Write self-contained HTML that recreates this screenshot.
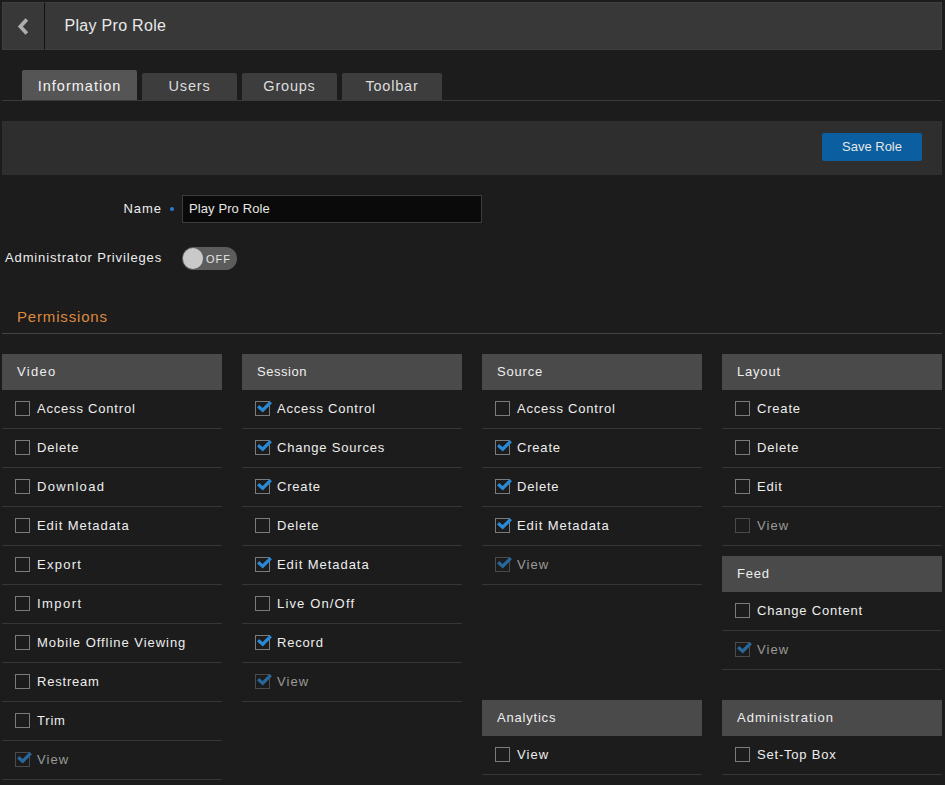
<!DOCTYPE html>
<html><head><meta charset="utf-8">
<style>
*{box-sizing:border-box;margin:0;padding:0}
html,body{width:945px;height:785px;overflow:hidden;background:#1c1c1c;font-family:"Liberation Sans",sans-serif;color:#e6e6e6}
.a{position:absolute}
#hdr{left:2px;top:2px;width:940px;height:48px;background:#383838;border:1px solid #3e3e3e}
#back{left:2px;top:2px;width:43px;height:48px;background:#383838;border:1px solid #3e3e3e;border-right:1px solid #111}
#title{left:64.5px;top:16.5px;font-size:16px;letter-spacing:0.3px;color:#e8e8e8;white-space:nowrap;line-height:17px}
.tab{top:73px;height:27px;background:#3d3d3d;border-radius:2px 2px 0 0;font-size:14.5px;letter-spacing:0.8px;text-align:center;color:#dcdcdc;line-height:27px}
.tab.on{top:70px;height:30px;background:#555555;color:#f2f2f2;line-height:32px;letter-spacing:1px}
#tabline{left:2px;top:100px;width:940px;height:1px;background:#3a3a3a}
#savebar{left:2px;top:121px;width:940px;height:54px;background:#2e2e2e}
#save{left:822px;top:133px;width:100px;height:28px;background:#0b5e9f;border-radius:2px;color:#e6e6e6;font-size:13px;letter-spacing:0px;text-align:center;line-height:28px}
.lbl{font-size:13px;letter-spacing:0.8px;white-space:nowrap;line-height:15px;color:#eeeeee}
#name{right:783px;top:201px;letter-spacing:0.95px}
#admin{right:783px;top:249.5px;letter-spacing:0.85px}
#dot{left:169.5px;top:207px;width:4px;height:4px;border-radius:50%;background:#2d78d2}
#inp{left:182px;top:195px;width:300px;height:28px;background:#0a0a0a;border:1px solid #3c3c3c;font-size:13px;letter-spacing:0.1px;padding-left:6px;line-height:26px;color:#e6e6e6}
#tog{left:182px;top:247px;width:55px;height:23px;border-radius:12px;background:#5c5c5c}
#knob{left:182.5px;top:248px;width:20.5px;height:21px;border-radius:50%;background:#c9c9c9}
#off{left:206px;top:253px;font-size:11px;letter-spacing:1px;color:#e6e6e6;line-height:12px}
#perm{left:17px;top:308px;font-size:15px;letter-spacing:0.83px;color:#dc8a40;line-height:17px}
#permline{left:2px;top:333px;width:940px;height:1px;background:#444}
.col{width:220px}
.h{height:36px;background:#4a4a4a;font-size:13px;letter-spacing:0.8px;padding-left:15px;line-height:35px;color:#eeeeee}
.r{height:39px;border-bottom:1px solid #363636;position:relative;font-size:13px;letter-spacing:0.8px;color:#eeeeee}
.r span{position:absolute;left:35px;top:11px;line-height:15px;white-space:nowrap}
.cb{position:absolute;left:13px;top:11px;width:15px;height:15px;border:1px solid #7a7a7a}
.cb svg{position:absolute;left:-1px;top:-1px;overflow:visible}
.r.d span{color:#9a9a9a}
.r.d .cb{border-color:#4a4a4a}
</style></head><body>
<div class="a" id="hdr"></div>
<div class="a" id="back"><svg width="45" height="51" style="position:absolute;left:-3px;top:-3px"><path d="M26.8 19.6 L20.35 26.5 L26.8 33.5" fill="none" stroke="#aeaeae" stroke-width="3.7" stroke-linecap="butt" stroke-linejoin="miter"/></svg></div>
<div class="a" id="title">Play Pro Role</div>

<div class="a tab on" style="left:22px;width:115px">Information</div>
<div class="a tab" style="left:142px;width:95px">Users</div>
<div class="a tab" style="left:242px;width:95px">Groups</div>
<div class="a tab" style="left:342px;width:100px">Toolbar</div>
<div class="a" id="tabline"></div>

<div class="a" id="savebar"></div>
<div class="a" id="save">Save Role</div>

<div class="a lbl" id="name">Name</div>
<div class="a" id="dot"></div>
<div class="a" id="inp">Play Pro Role</div>
<div class="a lbl" id="admin">Administrator Privileges</div>
<div class="a" id="tog"></div>
<div class="a" id="knob"></div>
<div class="a" id="off">OFF</div>

<div class="a" id="perm">Permissions</div>
<div class="a" id="permline"></div>

<!-- Video -->
<div class="a col" style="left:2px;top:354px">
<div class="h" style="letter-spacing:1.3px">Video</div>
<div class="r"><i class="cb"></i><span>Access Control</span></div>
<div class="r"><i class="cb"></i><span>Delete</span></div>
<div class="r"><i class="cb"></i><span style="letter-spacing:1.3px">Download</span></div>
<div class="r"><i class="cb"></i><span style="letter-spacing:0.95px">Edit Metadata</span></div>
<div class="r"><i class="cb"></i><span style="letter-spacing:1.25px">Export</span></div>
<div class="r"><i class="cb"></i><span style="letter-spacing:1.45px">Import</span></div>
<div class="r"><i class="cb"></i><span style="letter-spacing:0.96px">Mobile Offline Viewing</span></div>
<div class="r"><i class="cb"></i><span>Restream</span></div>
<div class="r"><i class="cb"></i><span>Trim</span></div>
<div class="r d"><i class="cb"><svg width="17" height="17"><path d="M3.1 5.2 L7.7 9.25 L15.85 1.14" fill="none" stroke="#27679a" stroke-width="3.2"/></svg></i><span style="letter-spacing:1.05px">View</span></div>
</div>

<!-- Session -->
<div class="a col" style="left:242px;top:354px">
<div class="h" style="letter-spacing:0.55px">Session</div>
<div class="r"><i class="cb"><svg width="17" height="17"><path d="M3.1 5.2 L7.7 9.25 L15.85 1.14" fill="none" stroke="#2a89d5" stroke-width="3.2"/></svg></i><span>Access Control</span></div>
<div class="r"><i class="cb"><svg width="17" height="17"><path d="M3.1 5.2 L7.7 9.25 L15.85 1.14" fill="none" stroke="#2a89d5" stroke-width="3.2"/></svg></i><span>Change Sources</span></div>
<div class="r"><i class="cb"><svg width="17" height="17"><path d="M3.1 5.2 L7.7 9.25 L15.85 1.14" fill="none" stroke="#2a89d5" stroke-width="3.2"/></svg></i><span>Create</span></div>
<div class="r"><i class="cb"></i><span>Delete</span></div>
<div class="r"><i class="cb"><svg width="17" height="17"><path d="M3.1 5.2 L7.7 9.25 L15.85 1.14" fill="none" stroke="#2a89d5" stroke-width="3.2"/></svg></i><span style="letter-spacing:0.95px">Edit Metadata</span></div>
<div class="r"><i class="cb"></i><span style="letter-spacing:1.15px">Live On/Off</span></div>
<div class="r"><i class="cb"><svg width="17" height="17"><path d="M3.1 5.2 L7.7 9.25 L15.85 1.14" fill="none" stroke="#2a89d5" stroke-width="3.2"/></svg></i><span>Record</span></div>
<div class="r d"><i class="cb"><svg width="17" height="17"><path d="M3.1 5.2 L7.7 9.25 L15.85 1.14" fill="none" stroke="#27679a" stroke-width="3.2"/></svg></i><span style="letter-spacing:1.05px">View</span></div>
</div>

<!-- Source -->
<div class="a col" style="left:482px;top:354px">
<div class="h">Source</div>
<div class="r"><i class="cb"></i><span>Access Control</span></div>
<div class="r"><i class="cb"><svg width="17" height="17"><path d="M3.1 5.2 L7.7 9.25 L15.85 1.14" fill="none" stroke="#2a89d5" stroke-width="3.2"/></svg></i><span>Create</span></div>
<div class="r"><i class="cb"><svg width="17" height="17"><path d="M3.1 5.2 L7.7 9.25 L15.85 1.14" fill="none" stroke="#2a89d5" stroke-width="3.2"/></svg></i><span>Delete</span></div>
<div class="r"><i class="cb"><svg width="17" height="17"><path d="M3.1 5.2 L7.7 9.25 L15.85 1.14" fill="none" stroke="#2a89d5" stroke-width="3.2"/></svg></i><span style="letter-spacing:0.95px">Edit Metadata</span></div>
<div class="r d"><i class="cb"><svg width="17" height="17"><path d="M3.1 5.2 L7.7 9.25 L15.85 1.14" fill="none" stroke="#27679a" stroke-width="3.2"/></svg></i><span style="letter-spacing:1.05px">View</span></div>
</div>

<!-- Layout -->
<div class="a col" style="left:722px;top:354px">
<div class="h">Layout</div>
<div class="r"><i class="cb"></i><span>Create</span></div>
<div class="r"><i class="cb"></i><span>Delete</span></div>
<div class="r"><i class="cb"></i><span>Edit</span></div>
<div class="r d"><i class="cb"></i><span style="letter-spacing:1.05px">View</span></div>
</div>

<!-- Feed -->
<div class="a col" style="left:722px;top:556px">
<div class="h">Feed</div>
<div class="r"><i class="cb"></i><span>Change Content</span></div>
<div class="r d"><i class="cb"><svg width="17" height="17"><path d="M3.1 5.2 L7.7 9.25 L15.85 1.14" fill="none" stroke="#27679a" stroke-width="3.2"/></svg></i><span style="letter-spacing:1.05px">View</span></div>
</div>

<!-- Analytics -->
<div class="a col" style="left:482px;top:700px">
<div class="h">Analytics</div>
<div class="r"><i class="cb"></i><span style="letter-spacing:1.05px">View</span></div>
</div>

<!-- Administration -->
<div class="a col" style="left:722px;top:700px">
<div class="h" style="letter-spacing:1.05px">Administration</div>
<div class="r"><i class="cb"></i><span>Set-Top Box</span></div>
</div>
</body></html>
